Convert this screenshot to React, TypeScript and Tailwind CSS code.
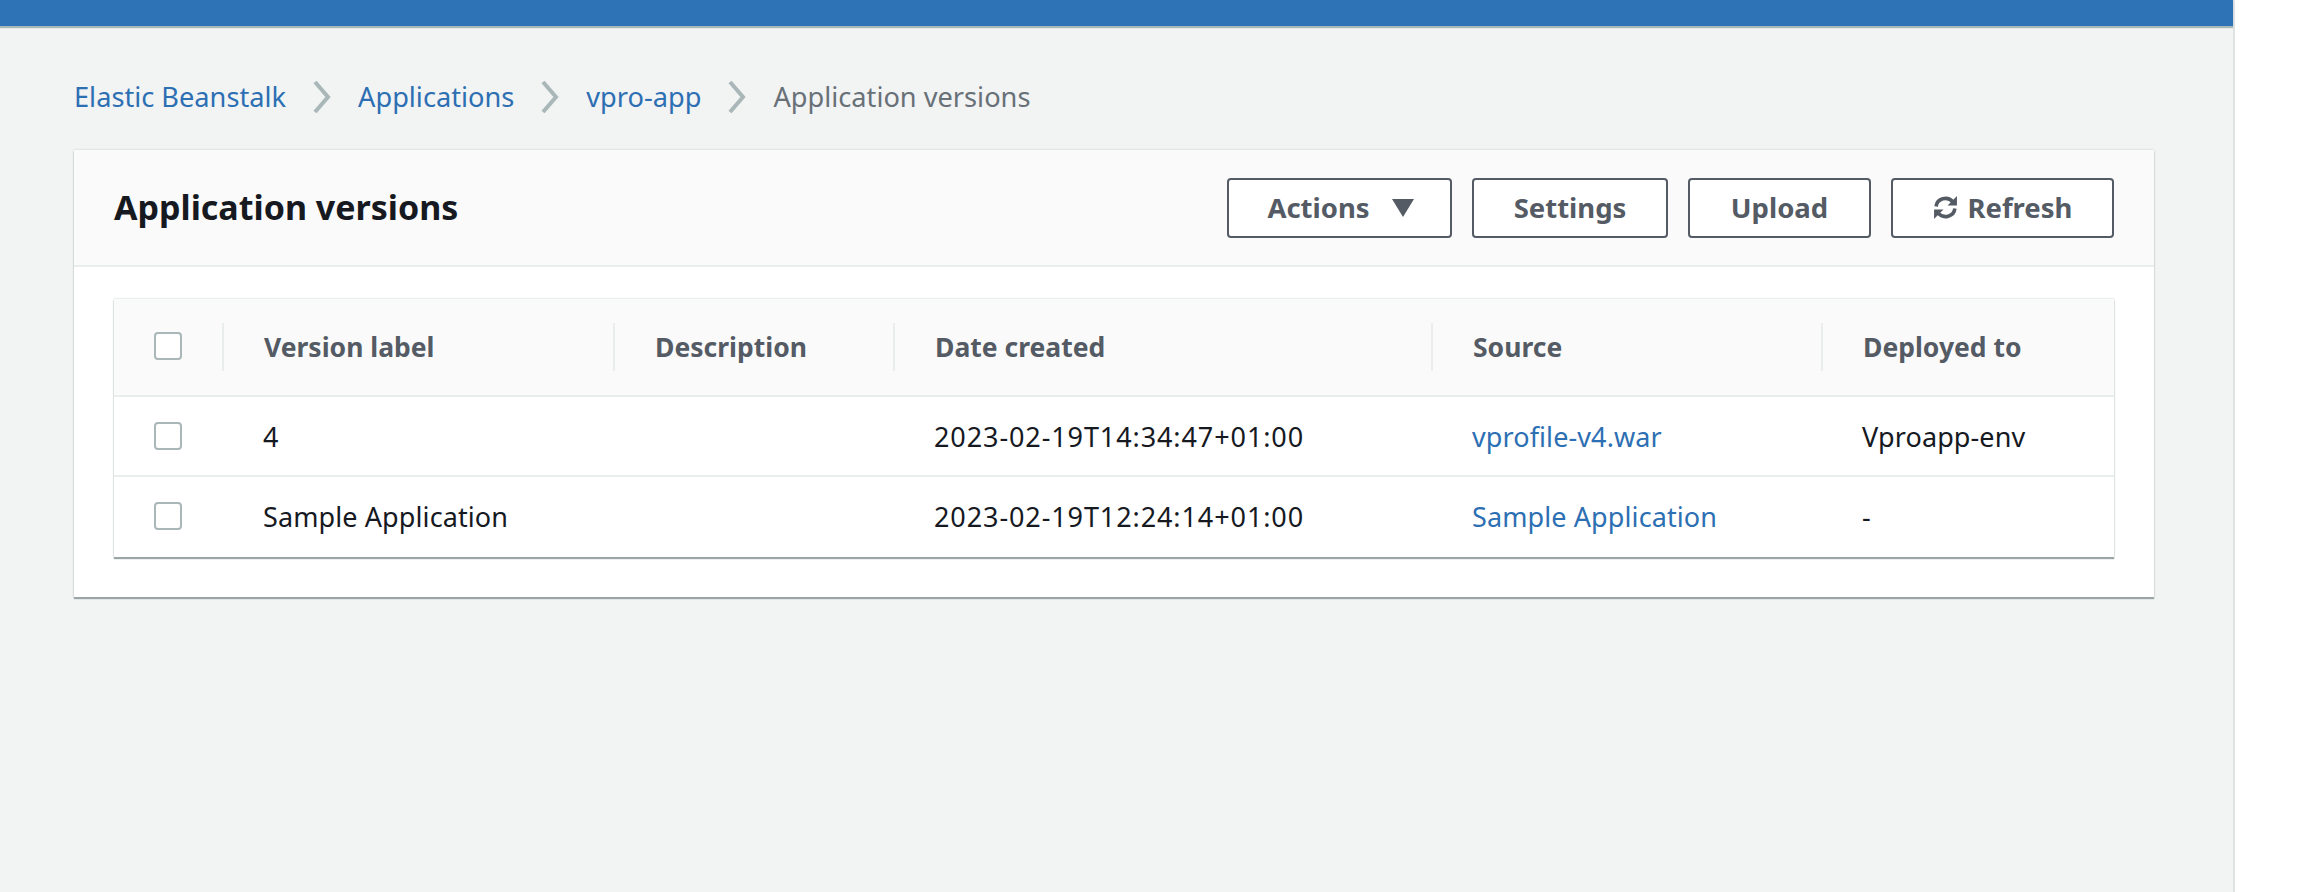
import React from 'react';

const columns = [
  { label: 'Version label', width: 'w-[391px]' },
  { label: 'Description', width: 'w-[280px]' },
  { label: 'Date created', width: 'w-[538px]' },
  { label: 'Source', width: 'w-[390px]' },
  { label: 'Deployed to', width: 'flex-1' },
];

const rows = [
  { label: '4', date: '2023-02-19T14:34:47+01:00', source: 'vprofile-v4.war', env: 'Vproapp-env', height: 'h-20 pt-[2px]' },
  { label: 'Sample Application', date: '2023-02-19T12:24:14+01:00', source: 'Sample Application', env: '-', height: 'h-20' },
];

const Chevron = () => (
  <svg width="20" height="32" viewBox="0 0 20 32" fill="none" className="shrink-0">
    <path d="M3 1 L16 16 L3 31" stroke="#aab7b8" strokeWidth="4" />
  </svg>
);

const Checkbox = () => <div className="w-7 h-7 -mt-[2px] bg-white border-2 border-[#aab7b8] rounded-[4px] shrink-0" />;

const Button = ({ children, width }: { children: React.ReactNode; width: string }) => (
  <button className={`${width} h-[60px] flex items-center justify-center bg-white border-2 border-[#545b64] rounded-[4px] text-[27.5px] font-bold text-[#545b64]`}>
    {children}
  </button>
);

export default function App() {
  return (
    <div className="flex h-[892px] bg-white font-['Noto_Sans',sans-serif] overflow-hidden">
      <div className="w-[2235px] h-full bg-[#f2f3f3] border-r-2 border-[#dfe3e3]">
        <div className="h-[26px] bg-[#2d73b6] shadow-[0_2px_1px_#aab7b8]" />

        <nav className="h-[124px] pl-[74px] pt-[18px] flex items-center text-[27.2px]">
          <a className="text-[#2d6fb3]">Elastic Beanstalk</a>
          <span className="mx-[26px]"><Chevron /></span>
          <a className="text-[#2d6fb3]">Applications</a>
          <span className="mx-[26px]"><Chevron /></span>
          <a className="text-[#2d6fb3]">vpro-app</a>
          <span className="mx-[26px]"><Chevron /></span>
          <span className="text-[#687078]">Application versions</span>
        </nav>

        <section className="ml-[74px] w-[2080px] h-[447px] bg-white shadow-[0_2px_1px_#9aa5a6,0_0_2px_#c5cccc]">
          <header className="h-[117px] bg-[#fafafa] border-b-2 border-[#eaeded] pl-10 pr-10 flex items-center justify-between">
            <h1 className="text-[34px] font-bold text-[#16191f]">Application versions</h1>
            <div className="flex gap-5">
              <Button width="w-[225px] pl-[2px]">
                Actions
                <svg width="22" height="18" viewBox="0 0 22 18" className="ml-[22px]"><path d="M0 0 H22 L11 18 Z" fill="#545b64" /></svg>
              </Button>
              <Button width="w-[196px]">Settings</Button>
              <Button width="w-[183px]">Upload</Button>
              <Button width="w-[223px]">
                <svg width="25" height="25" viewBox="0 0 24 24" fill="none" stroke="#545b64" strokeWidth="3.4" className="mr-[10px]">
                  <path d="M3 11 A9 8.5 0 0 1 19 6.5" />
                  <path d="M21 13 A9 8.5 0 0 1 5 17.5" />
                  <path d="M23 1 V10 H14 Z" fill="#545b64" stroke="none" />
                  <path d="M1 23 V14 H10 Z" fill="#545b64" stroke="none" />
                </svg>
                Refresh
              </Button>
            </div>
          </header>

          <div className="pt-8 px-10">
            <div className="bg-white shadow-[0_2px_1px_#9aa5a6,0_0_2px_#c5cccc]">
              <div className="h-[98px] bg-[#fafafa] border-b-2 border-[#eaeded] flex items-center">
                <div className="w-[110px] h-12 pl-10 flex items-center border-r-2 border-[#eaeded] shrink-0">
                  <Checkbox />
                </div>
                {columns.map((col, i) => (
                  <div
                    key={col.label}
                    className={`${col.width} h-12 pl-10 pt-[2px] flex items-center text-[26.5px] font-bold text-[#545b64] ${i < columns.length - 1 ? 'border-r-2 border-[#eaeded]' : ''}`}
                  >
                    {col.label}
                  </div>
                ))}
              </div>
              {rows.map((row, i) => (
                <div key={row.label} className={`${row.height} flex items-center text-[27px] tracking-[0.1px] text-[#16191f] ${i === 0 ? 'border-b-2 border-[#eaeded]' : ''}`}>
                  <div className="w-[109px] pl-10 shrink-0"><Checkbox /></div>
                  <div className="w-[391px] pl-10">{row.label}</div>
                  <div className="w-[280px] pl-10" />
                  <div className="w-[538px] pl-10 tracking-[0.9px]">{row.date}</div>
                  <div className="w-[390px] pl-10 text-[#2d6fb3]">{row.source}</div>
                  <div className="flex-1 pl-10">{row.env}</div>
                </div>
              ))}
            </div>
          </div>
        </section>
      </div>
    </div>
  );
}
